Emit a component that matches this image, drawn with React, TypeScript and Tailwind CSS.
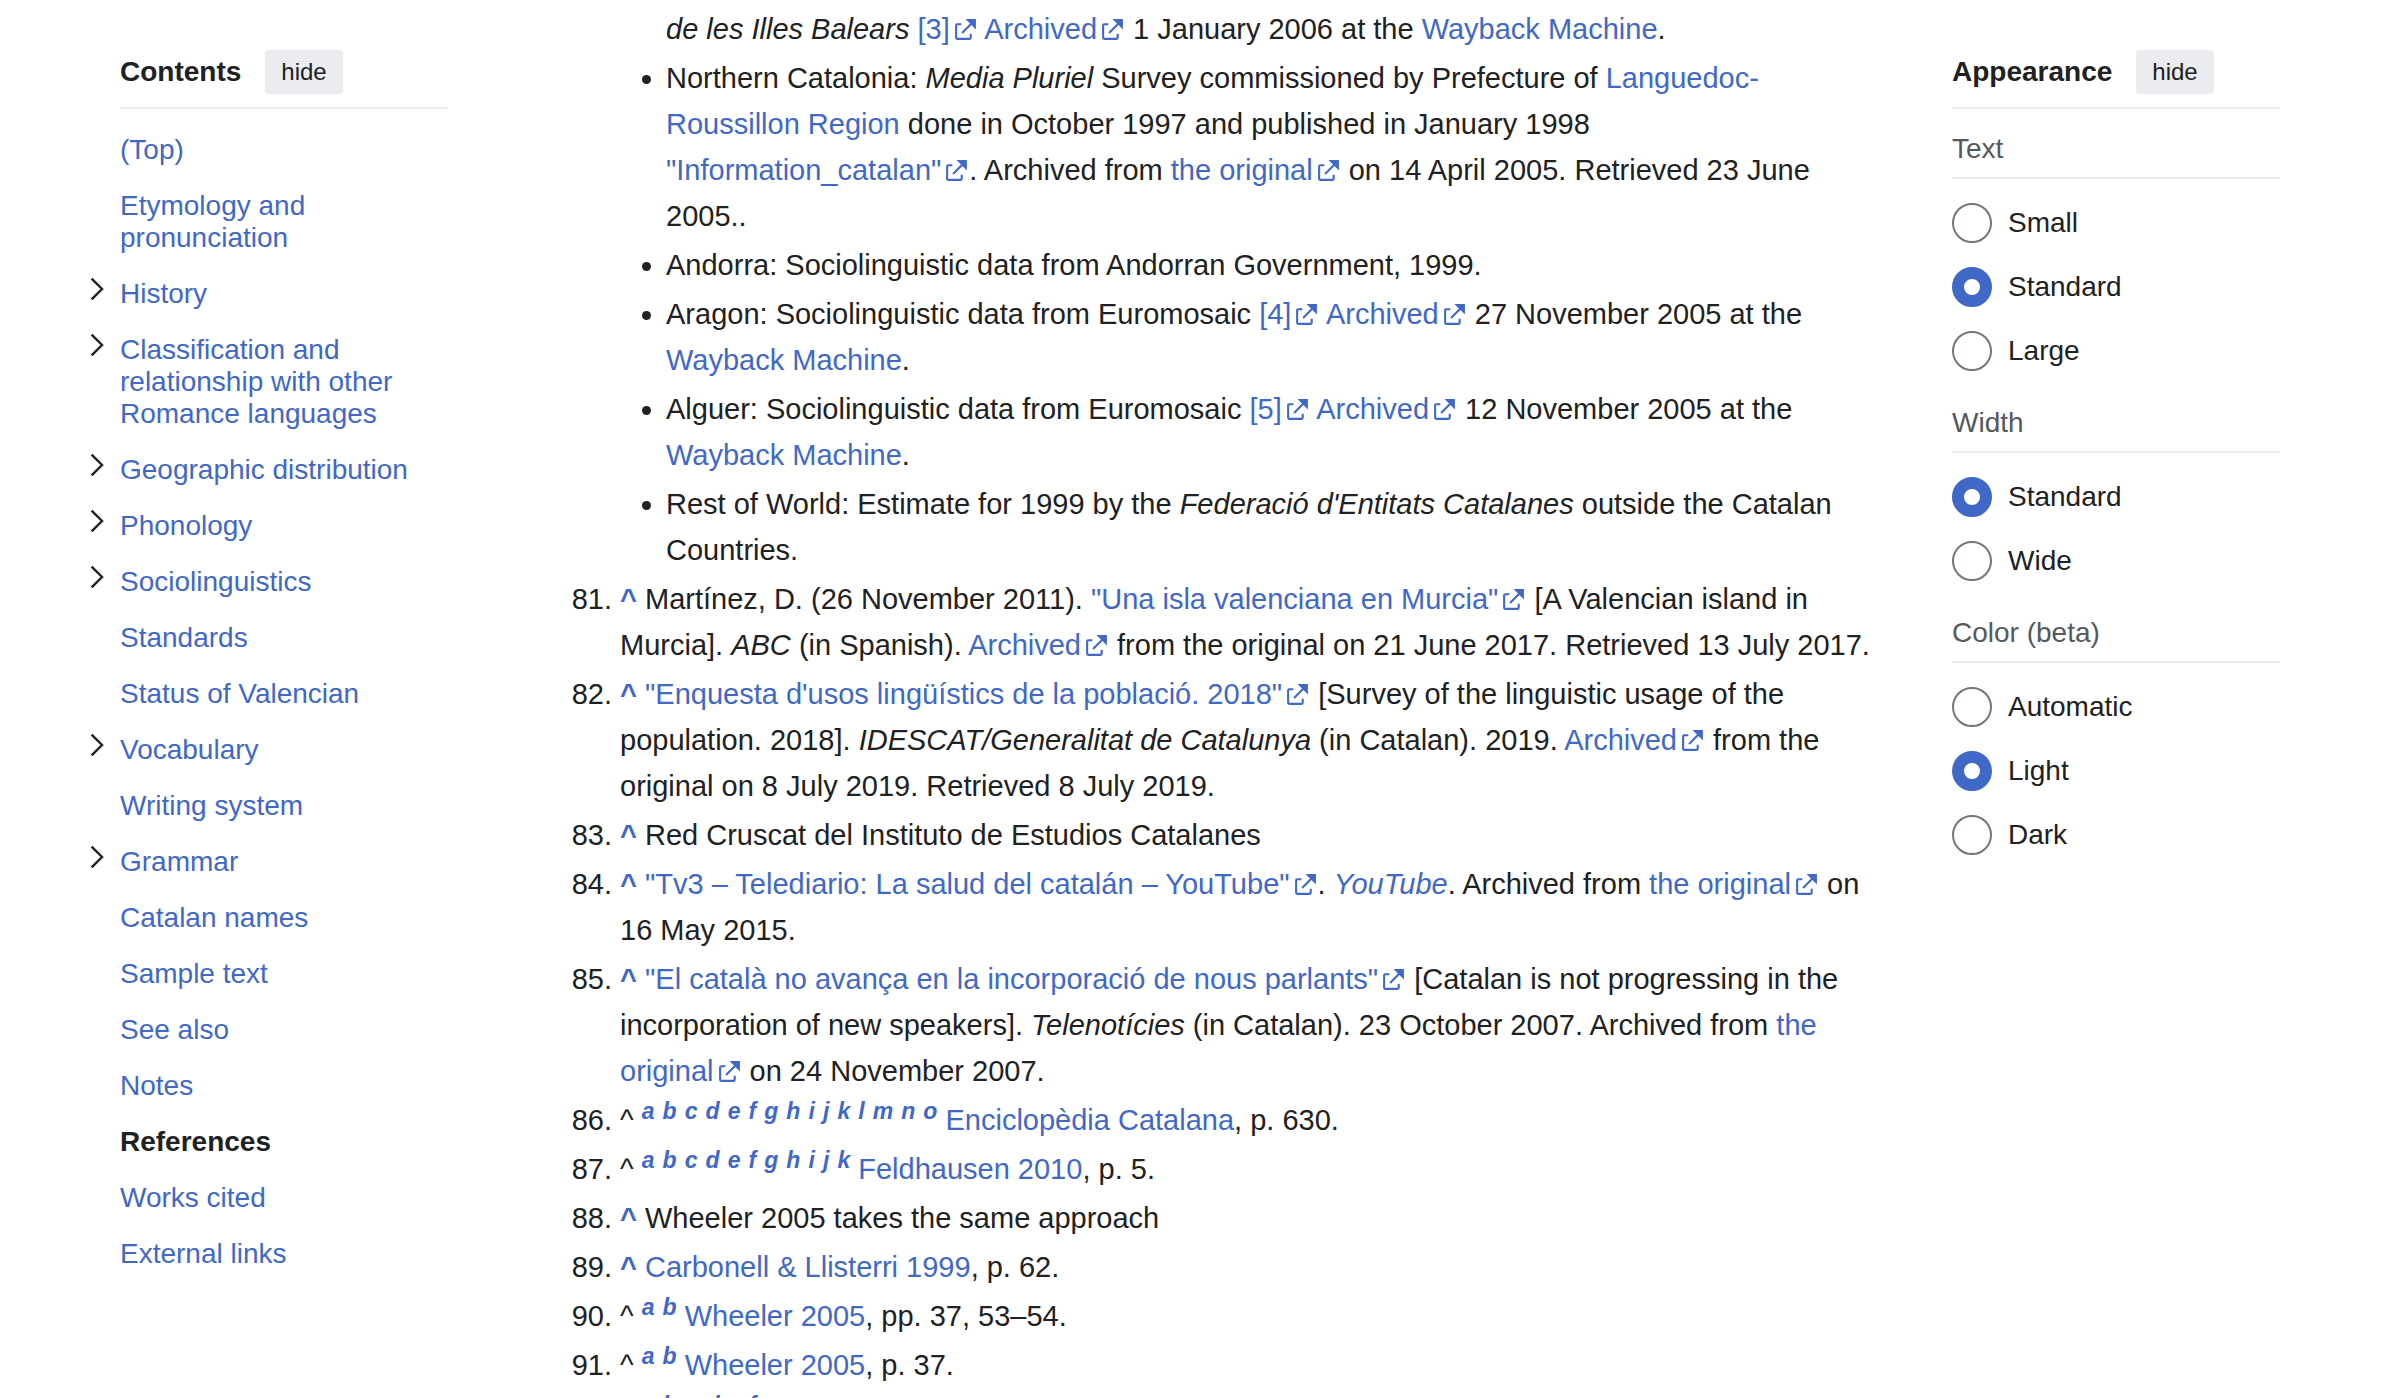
import { Fragment, useState, type ReactNode } from "react";

type TocEntry = { label: string; expandable?: boolean; active?: boolean };

const TOC: TocEntry[] = [
  { label: "(Top)" },
  { label: "Etymology and pronunciation" },
  { label: "History", expandable: true },
  { label: "Classification and relationship with other Romance languages", expandable: true },
  { label: "Geographic distribution", expandable: true },
  { label: "Phonology", expandable: true },
  { label: "Sociolinguistics", expandable: true },
  { label: "Standards" },
  { label: "Status of Valencian" },
  { label: "Vocabulary", expandable: true },
  { label: "Writing system" },
  { label: "Grammar", expandable: true },
  { label: "Catalan names" },
  { label: "Sample text" },
  { label: "See also" },
  { label: "Notes" },
  { label: "References", active: true },
  { label: "Works cited" },
  { label: "External links" },
];

function Link({ children }: { children: ReactNode }) {
  return (
    <a href="#" className="text-[#3f68c7] hover:underline">
      {children}
    </a>
  );
}

/* Link to another site; the icon stays on the line of the last word. */
function Ext({ children }: { children: string }) {
  const cut = children.lastIndexOf(" ") + 1;
  return (
    <a href="#" className="text-[#3f68c7] hover:underline">
      {children.slice(0, cut)}
      <span className="whitespace-nowrap">
        {children.slice(cut)}
        <svg viewBox="0 0 12 12" className="ml-[3px] inline-block size-[25px] align-[-3px]" fill="currentColor" aria-hidden="true">
          <path d="M6 1h5v5L8.86 3.85 4.7 8 4 7.3l4.15-4.16zM2 3h2v1H2v6h6V8h1v2a1 1 0 0 1-1 1H2a1 1 0 0 1-1-1V4a1 1 0 0 1 1-1" />
        </svg>
      </span>
    </a>
  );
}

function Up() {
  return (
    <b>
      <Link>^</Link>
    </b>
  );
}

function Backlinks({ letters }: { letters: string }) {
  return (
    <>
      ^{" "}
      {letters.split("").map((l) => (
        <Fragment key={l}>
          <a href="#" className="align-[11px] text-[23px] leading-none font-bold text-[#3f68c7] italic">
            {l}
          </a>{" "}
        </Fragment>
      ))}
    </>
  );
}

function PanelHeader({ title }: { title: string }) {
  return (
    <div className="flex items-center gap-6 border-b-2 border-[#ebecf0] pb-[13px]">
      <h2 className="text-[28px] leading-8 font-bold">{title}</h2>
      <button type="button" className="h-11 rounded-[4px] bg-[#ebecf0] px-4 text-2xl leading-8">
        hide
      </button>
    </div>
  );
}

function Contents() {
  return (
    <nav aria-label="Contents" className="pt-[50px]">
      <PanelHeader title="Contents" />
      <ul className="-ml-8 pt-[13px]">
        {TOC.map((t) => (
          <li key={t.label} className="flex py-3 text-[28px] leading-8">
            <div className="w-8 shrink-0">
              {t.expandable && (
                <button type="button" aria-label={`Toggle ${t.label} subsection`} className="flex h-[22px] w-5 items-center pl-[2px]">
                  <svg viewBox="0 0 14 24" className="h-6 w-3.5" fill="none" stroke="#202122" strokeWidth="2.4" aria-hidden="true">
                    <path d="M1.6 1.6 12 12 1.6 22.4" />
                  </svg>
                </button>
              )}
            </div>
            <a href="#" className={t.active ? "font-bold text-[#202122]" : "text-[#3f68c7] hover:underline"}>
              {t.label}
            </a>
          </li>
        ))}
      </ul>
    </nav>
  );
}

function RadioGroup({ title, options, initial }: { title: string; options: string[]; initial: string }) {
  const [value, setValue] = useState(initial);
  return (
    <fieldset>
      <legend className="w-full border-b-2 border-[#ebecf0] pb-3 text-[28px] leading-8 text-[#54595d]">{title}</legend>
      <div className="flex flex-col gap-6 pt-6">
        {options.map((o) => (
          <label key={o} className="flex items-center gap-4 text-[28px] leading-10">
            <input
              type="radio"
              name={title}
              checked={value === o}
              onChange={() => setValue(o)}
              className="size-10 shrink-0 appearance-none rounded-full border-2 border-[#72777d] bg-white checked:border-12 checked:border-[#3f68c7]"
            />
            {o}
          </label>
        ))}
      </div>
    </fieldset>
  );
}

function Appearance() {
  return (
    <aside className="pt-[50px]">
      <PanelHeader title="Appearance" />
      <div className="flex flex-col gap-9 pt-6">
        <RadioGroup title="Text" options={["Small", "Standard", "Large"]} initial="Standard" />
        <RadioGroup title="Width" options={["Standard", "Wide"]} initial="Standard" />
        <RadioGroup title="Color (beta)" options={["Automatic", "Light", "Dark"]} initial="Light" />
      </div>
    </aside>
  );
}

function References() {
  return (
    <main className="pt-[6px] text-[29px] leading-[46px]">
      <ol start={80} className="flex list-decimal flex-col gap-[3px] pl-[100px]">
        <li className="list-none">
          <ul className="flex list-disc flex-col gap-[3px] pl-[46px]">
            <li className="list-none">
              <i>de les Illes Balears</i> <Ext>[3]</Ext> <Ext>Archived</Ext> 1 January 2006 at the <Link>Wayback Machine</Link>.
            </li>
            <li>
              Northern Catalonia: <i>Media Pluriel</i> Survey commissioned by Prefecture of{" "}
              <Link>Languedoc-Roussillon Region</Link> done in October 1997 and published in January 1998{" "}
              <Ext>"Information_catalan"</Ext>. Archived from <Ext>the original</Ext> on 14 April 2005. Retrieved 23 June
              2005..
            </li>
            <li>Andorra: Sociolinguistic data from Andorran Government, 1999.</li>
            <li>
              Aragon: Sociolinguistic data from Euromosaic <Ext>[4]</Ext> <Ext>Archived</Ext> 27 November 2005 at the{" "}
              <Link>Wayback Machine</Link>.
            </li>
            <li>
              Alguer: Sociolinguistic data from Euromosaic <Ext>[5]</Ext> <Ext>Archived</Ext> 12 November 2005 at the{" "}
              <Link>Wayback Machine</Link>.
            </li>
            <li>
              Rest of World: Estimate for 1999 by the <i>Federació d'Entitats Catalanes</i> outside the Catalan Countries.
            </li>
          </ul>
        </li>
        <li>
          <Up /> Martínez, D. (26 November 2011). <Ext>"Una isla valenciana en Murcia"</Ext> [A Valencian island in
          Murcia]. <i>ABC</i> (in Spanish). <Ext>Archived</Ext> from the original on 21 June 2017. Retrieved 13 July 2017.
        </li>
        <li>
          <Up /> <Ext>"Enquesta d'usos lingüístics de la població. 2018"</Ext> [Survey of the linguistic usage of the
          population. 2018]. <i>IDESCAT/Generalitat de Catalunya</i> (in Catalan). 2019. <Ext>Archived</Ext> from the
          original on 8 July 2019. Retrieved 8 July 2019.
        </li>
        <li>
          <Up /> Red Cruscat del Instituto de Estudios Catalanes
        </li>
        <li>
          <Up /> <Ext>"Tv3 – Telediario: La salud del catalán – YouTube"</Ext>.{" "}
          <i>
            <Link>YouTube</Link>
          </i>
          . Archived from <Ext>the original</Ext> on 16 May 2015.
        </li>
        <li>
          <Up /> <Ext>"El català no avança en la incorporació de nous parlants"</Ext> [Catalan is not progressing in the
          incorporation of new speakers]. <i>Telenotícies</i> (in Catalan). 23 October 2007. Archived from{" "}
          <Ext>the original</Ext> on 24 November 2007.
        </li>
        <li>
          <Backlinks letters="abcdefghijklmno" />
          <Link>Enciclopèdia Catalana</Link>, p. 630.
        </li>
        <li>
          <Backlinks letters="abcdefghijk" />
          <Link>Feldhausen 2010</Link>, p. 5.
        </li>
        <li>
          <Up /> Wheeler 2005 takes the same approach
        </li>
        <li>
          <Up /> <Link>Carbonell &amp; Llisterri 1999</Link>, p. 62.
        </li>
        <li>
          <Backlinks letters="ab" />
          <Link>Wheeler 2005</Link>, pp. 37, 53–54.
        </li>
        <li>
          <Backlinks letters="ab" />
          <Link>Wheeler 2005</Link>, p. 37.
        </li>
        <li>
          <Backlinks letters="abcdef" />
        </li>
      </ol>
    </main>
  );
}

export default function App() {
  return (
    <div className="grid h-screen grid-cols-[328px_minmax(0,1fr)_328px] gap-x-[72px] overflow-hidden bg-white px-[120px] font-['Liberation_Sans',Arial,sans-serif] text-[#202122]">
      <Contents />
      <References />
      <Appearance />
    </div>
  );
}
